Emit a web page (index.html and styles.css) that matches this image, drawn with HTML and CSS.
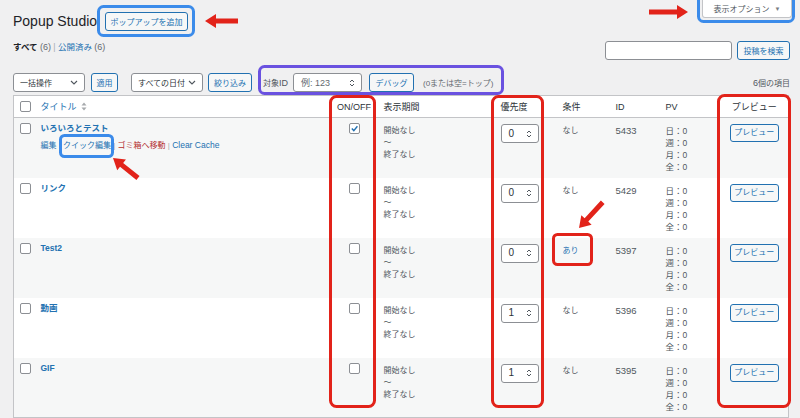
FILE: index.html
```html
<!DOCTYPE html>
<html lang="ja">
<head>
<meta charset="utf-8">
<title>Popup Studio</title>
<link rel="stylesheet" href="styles.css">
</head>
<body>
<div class="wrap">
  <div class="top">
    <div class="title-row">
      <h1>Popup Studio</h1>
      <span class="btn add">ポップアップを追加</span>
    </div>
    <div class="screen-tab">表示オプション <span class="tri">▼</span></div>
  </div>

  <div class="line2">
    <div class="subsubsub"><span class="current">すべて</span> <span class="lat">(6)</span> <span class="sep">|</span> <span class="link">公開済み</span> <span class="lat">(6)</span></div>
    <div class="search">
      <div class="field"></div>
      <span class="btn sbtn">投稿を検索</span>
    </div>
  </div>

  <div class="tablenav">
    <div class="select bulk">一括操作 <svg width="8" height="5" viewBox="0 0 8 5"><path d="M1 1 L4 4 L7 1" fill="none" stroke="#50575e" stroke-width="1.1"/></svg></div>
    <span class="btn apply">適用</span>
    <div class="select dates">すべての日付 <svg width="8" height="5" viewBox="0 0 8 5"><path d="M1 1 L4 4 L7 1" fill="none" stroke="#50575e" stroke-width="1.1"/></svg></div>
    <span class="btn filter">絞り込み</span>
    <span class="idlabel">対象<span class="lat">ID</span></span>
    <div class="num idnum"><span class="ph">例: 123</span><svg class="spin" width="6" height="10" viewBox="0 0 6 10"><path d="M1 4 L3 2 L5 4 M1 6 L3 8 L5 6" fill="none" stroke="#50575e" stroke-width="1"/></svg></div>
    <span class="btn debug">デバッグ</span>
    <span class="note">(0または空=トップ)</span>
    <span class="count"><span class="lat">6</span>個の項目</span>
  </div>

  <table class="list">
    <colgroup>
      <col class="c-cb"><col class="c-title"><col class="c-on"><col class="c-period"><col class="c-pri"><col class="c-cond"><col class="c-id"><col class="c-pv"><col class="c-prev">
    </colgroup>
    <thead>
      <tr>
        <th class="cb"><span class="chk"></span></th>
        <th class="title-h"><span class="link">タイトル</span> <svg class="sort" width="6" height="9" viewBox="0 0 6 9"><path d="M3 0.5 L5.5 3.5 L0.5 3.5 Z M3 8.5 L5.5 5.5 L0.5 5.5 Z" fill="#a7aaad"/></svg></th>
        <th class="center">ON/OFF</th>
        <th>表示期間</th>
        <th>優先度</th>
        <th>条件</th>
        <th>ID</th>
        <th>PV</th>
        <th class="center">プレビュー</th>
      </tr>
    </thead>
    <tbody>
      <tr>
        <td class="cb"><span class="chk"></span></td>
        <td class="tt"><div class="ptitle">いろいろとテスト</div>
          <div class="actions"><span class="link">編集</span> <span class="sep">|</span> <span class="link">クイック編集</span> <span class="sep">|</span> <span class="trash">ゴミ箱へ移動</span> <span class="sep">|</span> <span class="link">Clear Cache</span></div>
        </td>
        <td class="on"><span class="chk checked"><svg width="9" height="9" viewBox="0 0 9 9"><path d="M1.8 4.6 L3.8 6.6 L7.4 2.2" fill="none" stroke="#2271b1" stroke-width="1.4"/></svg></span></td>
        <td class="txt">開始なし<br>〜<br>終了なし</td>
        <td class="pri"><div class="num"><span>0</span><svg class="spin" width="6" height="10" viewBox="0 0 6 10"><path d="M1 4 L3 2 L5 4 M1 6 L3 8 L5 6" fill="none" stroke="#50575e" stroke-width="1"/></svg></div></td>
        <td class="txt">なし</td>
        <td class="txt idc">5433</td>
        <td class="txt pv">日：0<br>週：0<br>月：0<br>全：0</td>
        <td class="prev"><span class="btn pbtn">プレビュー</span></td>
      </tr>
      <tr>
        <td class="cb"><span class="chk"></span></td>
        <td class="tt"><div class="ptitle">リンク</div></td>
        <td class="on"><span class="chk"></span></td>
        <td class="txt">開始なし<br>〜<br>終了なし</td>
        <td class="pri"><div class="num"><span>0</span><svg class="spin" width="6" height="10" viewBox="0 0 6 10"><path d="M1 4 L3 2 L5 4 M1 6 L3 8 L5 6" fill="none" stroke="#50575e" stroke-width="1"/></svg></div></td>
        <td class="txt">なし</td>
        <td class="txt idc">5429</td>
        <td class="txt pv">日：0<br>週：0<br>月：0<br>全：0</td>
        <td class="prev"><span class="btn pbtn">プレビュー</span></td>
      </tr>
      <tr>
        <td class="cb"><span class="chk"></span></td>
        <td class="tt"><div class="ptitle">Test2</div></td>
        <td class="on"><span class="chk"></span></td>
        <td class="txt">開始なし<br>〜<br>終了なし</td>
        <td class="pri"><div class="num"><span>0</span><svg class="spin" width="6" height="10" viewBox="0 0 6 10"><path d="M1 4 L3 2 L5 4 M1 6 L3 8 L5 6" fill="none" stroke="#50575e" stroke-width="1"/></svg></div></td>
        <td class="txt"><span class="link">あり</span></td>
        <td class="txt idc">5397</td>
        <td class="txt pv">日：0<br>週：0<br>月：0<br>全：0</td>
        <td class="prev"><span class="btn pbtn">プレビュー</span></td>
      </tr>
      <tr>
        <td class="cb"><span class="chk"></span></td>
        <td class="tt"><div class="ptitle">動画</div></td>
        <td class="on"><span class="chk"></span></td>
        <td class="txt">開始なし<br>〜<br>終了なし</td>
        <td class="pri"><div class="num"><span>1</span><svg class="spin" width="6" height="10" viewBox="0 0 6 10"><path d="M1 4 L3 2 L5 4 M1 6 L3 8 L5 6" fill="none" stroke="#50575e" stroke-width="1"/></svg></div></td>
        <td class="txt">なし</td>
        <td class="txt idc">5396</td>
        <td class="txt pv">日：0<br>週：0<br>月：0<br>全：0</td>
        <td class="prev"><span class="btn pbtn">プレビュー</span></td>
      </tr>
      <tr>
        <td class="cb"><span class="chk"></span></td>
        <td class="tt"><div class="ptitle">GIF</div></td>
        <td class="on"><span class="chk"></span></td>
        <td class="txt">開始なし<br>〜<br>終了なし</td>
        <td class="pri"><div class="num"><span>1</span><svg class="spin" width="6" height="10" viewBox="0 0 6 10"><path d="M1 4 L3 2 L5 4 M1 6 L3 8 L5 6" fill="none" stroke="#50575e" stroke-width="1"/></svg></div></td>
        <td class="txt">なし</td>
        <td class="txt idc">5395</td>
        <td class="txt pv">日：0<br>週：0<br>月：0<br>全：0</td>
        <td class="prev"><span class="btn pbtn">プレビュー</span></td>
      </tr>
    </tbody>
  </table>
</div>

<svg class="overlay" width="800" height="418" viewBox="0 0 800 418">
  <g fill="none" stroke-width="3">
    <rect x="98.5" y="6.5" width="95" height="29" rx="5" stroke="#3b8bea"/>
    <rect x="698.5" y="-4" width="95" height="25.5" rx="5" stroke="#3b8bea"/>
    <rect x="60.5" y="135.5" width="52" height="21" rx="4" stroke="#3b8bea"/>
    <rect x="259.5" y="66.5" width="243" height="27" rx="5" stroke="#6a52e0"/>
    <rect x="330.5" y="96.5" width="44" height="310" rx="6" stroke="#e2231a"/>
    <rect x="492.5" y="96.5" width="50" height="310" rx="6" stroke="#e2231a"/>
    <rect x="718.5" y="95.5" width="71" height="311" rx="6" stroke="#e2231a"/>
    <rect x="553.5" y="234.5" width="38" height="30" rx="4" stroke="#e2231a"/>
  </g>
  <g fill="#e2231a">
    <polygon points="205,21 216,14 216,18.5 238,18.5 238,23.5 216,23.5 216,28"/>
    <polygon points="688,12 677,5 677,9.5 649,9.5 649,14.5 677,14.5 677,19"/>
    <polygon transform="translate(113 158) rotate(38.7)" points="0,0 11,-7 11,-2.5 32,-2.5 32,2.5 11,2.5 11,7"/>
    <polygon transform="translate(579 228) rotate(-47.3)" points="0,0 11,-7 11,-2.5 35,-2.5 35,2.5 11,2.5 11,7"/>
  </g>
</svg>
</body>
</html>
```

FILE: styles.css
```css
* { box-sizing: border-box; }

body {
  margin: 0;
  width: 800px;
  height: 418px;
  overflow: hidden;
  position: relative;
  background: #f0f0f1;
  font-family: "Liberation Sans", "Noto Sans CJK JP", sans-serif;
  color: #3c434a;
}

.wrap { padding: 0 10px 0 13px; }

.link { color: #2271b1; }
.sep { color: #a7aaad; }
.lat { font-size: 9px; }

.top {
  display: flex;
  justify-content: space-between;
  align-items: flex-start;
  height: 38px;
}
.title-row {
  display: flex;
  align-items: center;
  gap: 8px;
  padding-top: 12px;
}
h1 {
  margin: 0;
  font-size: 14px;
  font-weight: 400;
  line-height: 19px;
  color: #1d2327;
}

.btn {
  display: inline-flex;
  align-items: center;
  justify-content: center;
  height: 19px;
  padding: 0 5px;
  border: 1px solid #2271b1;
  border-radius: 3px;
  background: #f6f7f7;
  color: #2271b1;
  font-size: 8px;
  white-space: nowrap;
}
.add { width: 83px; }

.screen-tab {
  width: 90px;
  height: 18px;
  margin-right: -2px;
  display: flex;
  align-items: center;
  justify-content: center;
  gap: 5px;
  background: #fff;
  border: 1px solid #c3c4c7;
  border-top: none;
  border-radius: 0 0 3px 3px;
  font-size: 8px;
  color: #50575e;
}
.screen-tab .tri { font-size: 6px; color: #787c82; }

.line2 {
  display: flex;
  justify-content: space-between;
  align-items: flex-start;
  height: 22px;
}
.subsubsub {
  margin-top: 3px;
  font-size: 8.5px;
  line-height: 12px;
  color: #646970;
}
.subsubsub .current { color: #1d2327; font-weight: 700; }
.search {
  display: flex;
  gap: 5px;
  margin-top: 3px;
}
.search .field {
  width: 127px;
  height: 19px;
  background: #fff;
  border: 1px solid #8c8f94;
  border-radius: 3px;
}
.sbtn { width: 53px; }

.tablenav {
  display: flex;
  align-items: center;
  height: 19px;
  margin-top: 13px;
  font-size: 8px;
}
.select {
  height: 19px;
  display: flex;
  align-items: center;
  justify-content: space-between;
  padding: 0 6px;
  background: #fff;
  border: 1px solid #8c8f94;
  border-radius: 3px;
  color: #2c3338;
  font-size: 8px;
}
.bulk { width: 72px; }
.apply { width: 27px; margin-left: 6px; }
.dates { width: 72px; margin-left: 13px; }
.filter { width: 44px; margin-left: 5px; }
.idlabel { margin-left: 11px; color: #50575e; }
.num {
  display: flex;
  align-items: center;
  justify-content: space-between;
  height: 19px;
  padding: 0 6px 0 7px;
  background: #fff;
  border: 1px solid #8c8f94;
  border-radius: 3px;
  color: #2c3338;
  font-size: 10px;
}
.idnum { width: 69px; margin-left: 5px; font-size: 9px; }
.idnum .ph { color: #646970; }
.debug { width: 45px; margin-left: 7px; }
.note { margin-left: 9px; color: #646970; }
.count { margin-left: auto; color: #50575e; }

.list {
  margin-top: 3px;
  width: 775px;
  table-layout: fixed;
  border-collapse: collapse;
  border: 1px solid #c3c4c7;
  background: #fff;
}
.c-cb { width: 23px; }
.c-title { width: 294px; }
.c-on { width: 47px; }
.c-period { width: 117px; }
.c-pri { width: 62px; }
.c-cond { width: 53px; }
.c-id { width: 50px; }
.c-pv { width: 61px; }
.c-prev { width: 68px; }

.list th {
  height: 22px;
  padding: 0 6px;
  text-align: left;
  vertical-align: middle;
  font-size: 9px;
  font-weight: 400;
  color: #2c3338;
  border-bottom: 1px solid #c3c4c7;
  white-space: nowrap;
}
.list th.center { text-align: center; padding: 0; }
.list th.cb { padding: 0 0 0 6px; }
.list th.title-h { padding-left: 4px; }
.sort { margin-left: 2px; vertical-align: -1px; }

.list tbody tr { height: 60px; }
.list tbody tr:nth-child(odd) { background: #f6f7f7; }
.list td {
  vertical-align: top;
  padding: 7px 6px 0;
  font-size: 8px;
  line-height: 12px;
  color: #50575e;
}
.list td.idc { font-size: 9.5px; }
.list td.pv { font-size: 8.5px; }
.list td.cb { padding: 5px 0 0 6px; }
.list td.tt { padding: 4px 4px 0; }
.list td.on { padding: 5px 0 0; text-align: center; }
.list td.pri { padding-top: 6px; }
.list td.prev { padding: 6px 0 0; text-align: center; }

.chk {
  display: inline-flex;
  align-items: center;
  justify-content: center;
  width: 11px;
  height: 11px;
  vertical-align: middle;
  background: #fff;
  border: 1px solid #8c8f94;
  border-radius: 2px;
}

.ptitle {
  font-size: 8.5px;
  font-weight: 700;
  line-height: 12px;
  color: #2271b1;
}
.actions {
  margin-top: 5px;
  font-size: 8px;
  line-height: 12px;
}
.actions .link:last-child { font-size: 8.5px; }
.trash { color: #b32d2e; }

.list td.pri .num { width: 38px; }
.pbtn { width: 49px; height: 18px; }

.overlay {
  position: absolute;
  left: 0;
  top: 0;
  pointer-events: none;
}
```
